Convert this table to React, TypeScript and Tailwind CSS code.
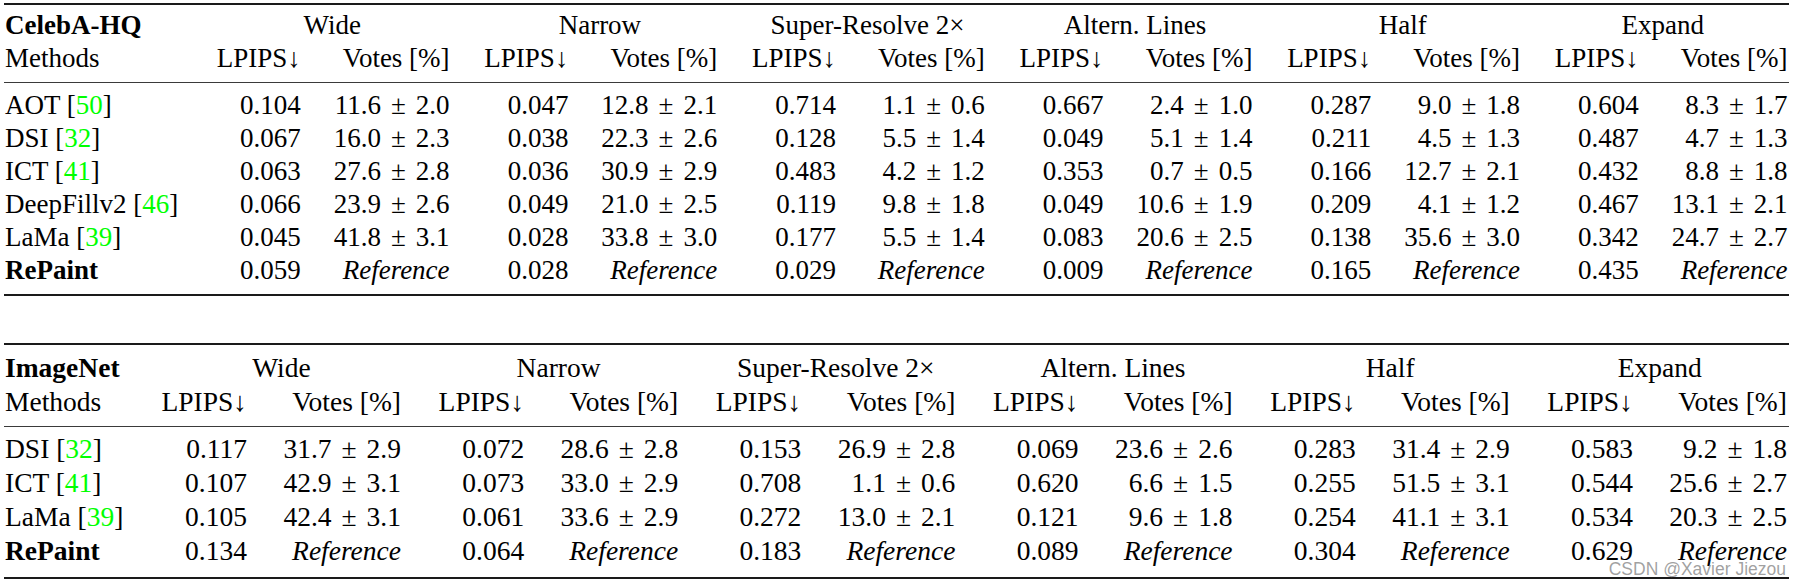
import React from "react";

type Cell = [string, string];

interface Row {
  name: string;
  cite?: string;
  bold?: boolean;
  cells: Cell[];
}

const groups = ["Wide", "Narrow", "Super-Resolve 2×", "Altern. Lines", "Half", "Expand"];

const R = "Reference";

const celebaRows: Row[] = [
  {
    name: "AOT",
    cite: "50",
    cells: [
      ["0.104", "11.6 ± 2.0"],
      ["0.047", "12.8 ± 2.1"],
      ["0.714", "1.1 ± 0.6"],
      ["0.667", "2.4 ± 1.0"],
      ["0.287", "9.0 ± 1.8"],
      ["0.604", "8.3 ± 1.7"],
    ],
  },
  {
    name: "DSI",
    cite: "32",
    cells: [
      ["0.067", "16.0 ± 2.3"],
      ["0.038", "22.3 ± 2.6"],
      ["0.128", "5.5 ± 1.4"],
      ["0.049", "5.1 ± 1.4"],
      ["0.211", "4.5 ± 1.3"],
      ["0.487", "4.7 ± 1.3"],
    ],
  },
  {
    name: "ICT",
    cite: "41",
    cells: [
      ["0.063", "27.6 ± 2.8"],
      ["0.036", "30.9 ± 2.9"],
      ["0.483", "4.2 ± 1.2"],
      ["0.353", "0.7 ± 0.5"],
      ["0.166", "12.7 ± 2.1"],
      ["0.432", "8.8 ± 1.8"],
    ],
  },
  {
    name: "DeepFillv2",
    cite: "46",
    cells: [
      ["0.066", "23.9 ± 2.6"],
      ["0.049", "21.0 ± 2.5"],
      ["0.119", "9.8 ± 1.8"],
      ["0.049", "10.6 ± 1.9"],
      ["0.209", "4.1 ± 1.2"],
      ["0.467", "13.1 ± 2.1"],
    ],
  },
  {
    name: "LaMa",
    cite: "39",
    cells: [
      ["0.045", "41.8 ± 3.1"],
      ["0.028", "33.8 ± 3.0"],
      ["0.177", "5.5 ± 1.4"],
      ["0.083", "20.6 ± 2.5"],
      ["0.138", "35.6 ± 3.0"],
      ["0.342", "24.7 ± 2.7"],
    ],
  },
  {
    name: "RePaint",
    bold: true,
    cells: [
      ["0.059", R],
      ["0.028", R],
      ["0.029", R],
      ["0.009", R],
      ["0.165", R],
      ["0.435", R],
    ],
  },
];

const imagenetRows: Row[] = [
  {
    name: "DSI",
    cite: "32",
    cells: [
      ["0.117", "31.7 ± 2.9"],
      ["0.072", "28.6 ± 2.8"],
      ["0.153", "26.9 ± 2.8"],
      ["0.069", "23.6 ± 2.6"],
      ["0.283", "31.4 ± 2.9"],
      ["0.583", "9.2 ± 1.8"],
    ],
  },
  {
    name: "ICT",
    cite: "41",
    cells: [
      ["0.107", "42.9 ± 3.1"],
      ["0.073", "33.0 ± 2.9"],
      ["0.708", "1.1 ± 0.6"],
      ["0.620", "6.6 ± 1.5"],
      ["0.255", "51.5 ± 3.1"],
      ["0.544", "25.6 ± 2.7"],
    ],
  },
  {
    name: "LaMa",
    cite: "39",
    cells: [
      ["0.105", "42.4 ± 3.1"],
      ["0.061", "33.6 ± 2.9"],
      ["0.272", "13.0 ± 2.1"],
      ["0.121", "9.6 ± 1.8"],
      ["0.254", "41.1 ± 3.1"],
      ["0.534", "20.3 ± 2.5"],
    ],
  },
  {
    name: "RePaint",
    bold: true,
    cells: [
      ["0.134", R],
      ["0.064", R],
      ["0.183", R],
      ["0.089", R],
      ["0.304", R],
      ["0.629", R],
    ],
  },
];

function Votes({ v }: { v: string }) {
  if (v === R) return <div className="text-right italic">Reference</div>;
  const [a, b] = v.split(" ± ");
  return (
    <div className="text-right whitespace-nowrap">
      {a}
      <span className="mx-[10px]">±</span>
      {b}
    </div>
  );
}

function Method({ row }: { row: Row }) {
  return (
    <div className={`pl-[1px] whitespace-nowrap ${row.bold ? "font-bold" : ""}`}>
      {row.name}
      {row.cite && (
        <>
          {" "}[<span className="text-[#00ff00]">{row.cite}</span>]
        </>
      )}
    </div>
  );
}

interface TableProps {
  dataset: string;
  rows: Row[];
  gridCls: string;
  textCls: string;
  groupCls: string[];
  wrapCls: string;
  headTopCls: string;
  midCls: string;
  bottomCls: string;
}

function ResultsTable(p: TableProps) {
  return (
    <div className={`ml-[4px] w-[1785px] ${p.wrapCls}`}>
      <div className="h-[2px] bg-[#1a1a1a]" />
      <div className={`grid ${p.gridCls} ${p.textCls} ${p.headTopCls}`}>
        <div className="pl-[1px] font-bold">{p.dataset}</div>
        {groups.map((g, i) => (
          <div key={g} className={`col-span-2 text-center whitespace-nowrap ${p.groupCls[i]}`}>
            {g}
          </div>
        ))}
        <div className="pl-[1px]">Methods</div>
        {groups.map((g) => (
          <React.Fragment key={g}>
            <div className="text-right whitespace-nowrap">LPIPS↓</div>
            <div className="text-right whitespace-nowrap">Votes [%]</div>
          </React.Fragment>
        ))}
      </div>
      <div className={`h-[1px] bg-[#3a3a3a] ${p.midCls}`} />
      <div className={`grid ${p.gridCls} ${p.textCls}`}>
        {p.rows.map((row) => (
          <React.Fragment key={row.name}>
            <Method row={row} />
            {row.cells.map(([l, v], i) => (
              <React.Fragment key={i}>
                <div className="text-right">{l}</div>
                <Votes v={v} />
              </React.Fragment>
            ))}
          </React.Fragment>
        ))}
      </div>
      <div className={`h-[2px] bg-[#1a1a1a] ${p.bottomCls}`} />
    </div>
  );
}

export default function App() {
  return (
    <div className="relative w-[1799px] h-[582px] overflow-hidden bg-white text-black font-['Liberation_Serif','Times_New_Roman',serif]">
      <div className="pt-[3px]">
        <ResultsTable
          dataset="CelebA-HQ"
          rows={celebaRows}
          gridCls="grid-cols-[178px_repeat(6,118.8px_148.8px)]"
          textCls="text-[27px] leading-[33px]"
          groupCls={["pl-[33px]", "pl-[33px]", "pl-[33px]", "pl-[33px]", "pl-[33px]", "pl-[18px]"]}
          wrapCls=""
          headTopCls="mt-[4px]"
          midCls="mt-[7px] mb-[6px]"
          bottomCls="mt-[7px]"
        />
        <ResultsTable
          dataset="ImageNet"
          rows={imagenetRows}
          gridCls="grid-cols-[119.8px_repeat(6,123.2px_154px)]"
          textCls="text-[27.5px] leading-[34px]"
          groupCls={["pl-[38px]", "pl-[38px]", "pl-[38px]", "pl-[38px]", "pl-[38px]", "pl-[23px]"]}
          wrapCls="mt-[47px]"
          headTopCls="mt-[6px]"
          midCls="mt-[7px] mb-[5px]"
          bottomCls="mt-[8.5px]"
        />
      </div>
      <div className="absolute top-[561px] right-[13px] text-[17.5px] leading-none font-['Liberation_Sans',Arial,sans-serif] text-[rgba(125,125,125,0.72)] whitespace-nowrap">
        CSDN @Xavier Jiezou
      </div>
    </div>
  );
}
